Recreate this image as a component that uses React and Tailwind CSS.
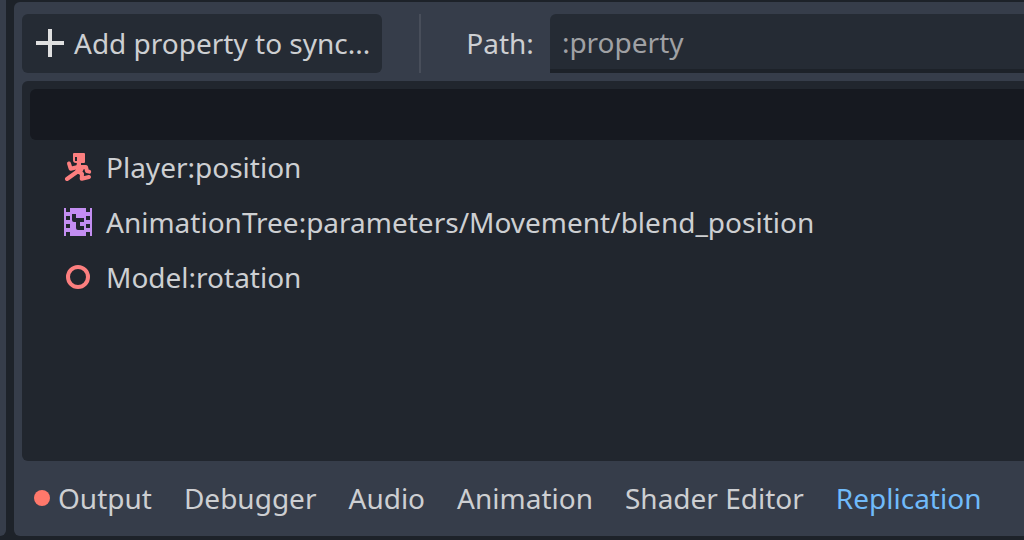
const properties = [
  { name: 'Player:position', Icon: RunnerIcon },
  { name: 'AnimationTree:parameters/Movement/blend_position', Icon: FilmIcon },
  { name: 'Model:rotation', Icon: RingIcon },
];

const tabs = ['Output', 'Debugger', 'Audio', 'Animation', 'Shader Editor', 'Replication'];

function PlusIcon() {
  return (
    <svg className="size-7 shrink-0" viewBox="0 0 28 28" fill="#e0e0e0" shapeRendering="crispEdges" aria-hidden="true">
      <path d="M12 0h4v12h12v4H16v12h-4V16H0v-4h12z" />
    </svg>
  );
}

function RunnerIcon() {
  return (
    <svg className="size-7 shrink-0" viewBox="0 0 28 28" fill="none" aria-hidden="true">
      <path
        fill="#fc7f7f"
        fillRule="evenodd"
        d="M10 0h10a1 1 0 0 1 1 1v8a1 1 0 0 1-1 1H12a3 3 0 0 1-3-3V1a1 1 0 0 1 1-1zM11 4v4h2V4z"
      />
      <path fill="#fc7f7f" d="M13 9h4v3h5l-3.5 6.5-2.5 3-5.5-1.5 1.5-4z" />
      <g stroke="#fc7f7f" strokeWidth="4" strokeLinecap="round" strokeLinejoin="round">
        <path d="M5 10.5 6.6 15.7 14 14" />
        <path d="M13.5 18.5 3 26" />
        <path d="M15 18.5l3 2.3-.3 5 7.3-1.8" />
        <path d="M16 14h6l1 4 2.2.6" />
      </g>
    </svg>
  );
}

function FilmIcon() {
  return (
    <svg className="size-7 shrink-0" viewBox="0 0 28 28" fill="#c38ef1" aria-hidden="true">
      <path
        fillRule="evenodd"
        d="M0 0h2v4h4V0h16v4h4V0h2v28h-2v-4h-4v4H6v-4H2v4H0zM2 8v4h4V8zM2 16v4h4v-4zM22 8v4h4V8zM22 16v4h4v-4zM8 6v6a2 2 0 0 0 2 2h2v6a2 2 0 0 0 2 2h6v-4h-4v-4h4v-4h-8V6z"
      />
    </svg>
  );
}

function RingIcon() {
  return (
    <svg className="size-7 shrink-0" viewBox="0 0 28 28" fill="none" aria-hidden="true">
      <circle cx="14" cy="14" r="10" stroke="#fc7f7f" strokeWidth="4" />
    </svg>
  );
}

export default function App() {
  return (
    <div className="flex h-screen gap-2 overflow-hidden bg-[#1d2229] pb-1 font-['Noto_Sans',sans-serif] text-[28px] leading-9 text-[#cdcfd2]">
      <aside className="w-1.5 shrink-0 rounded-br-md bg-[#363d4a]" />
      <main className="mt-0.5 flex min-w-0 flex-1 flex-col rounded-l-md bg-[#363d4a] pt-3 pl-2">
        <div className="flex h-[59px] shrink-0 items-stretch">
          <button
            type="button"
            className="flex shrink-0 items-center gap-2.5 rounded-md bg-[#252b34] pr-3 pb-px pl-3.5 whitespace-nowrap"
          >
            <PlusIcon />
            Add property to sync...
          </button>
          <div className="mx-[37px] w-0.5 shrink-0 bg-[#484e5a]" />
          <div className="flex min-w-0 flex-1 items-stretch gap-4 pl-2">
            <label htmlFor="path" className="flex shrink-0 items-center pb-px">
              Path:
            </label>
            <input
              id="path"
              type="text"
              placeholder=":property"
              className="min-w-0 flex-1 rounded-tl-md border-b-4 border-[#1d2229] bg-[#252b34] px-3 outline-none placeholder:text-[#a0a1a4]"
            />
          </div>
        </div>

        <section className="mt-2 min-h-0 flex-1 rounded-l-md bg-[#21262e] pt-2 pl-2">
          <div className="h-[51px] rounded-l-md bg-[#161920]" />
          <ul>
            {properties.map(({ name, Icon }) => (
              <li key={name} className="flex h-[55px] items-center gap-3.5 pb-px pl-[34px]">
                <Icon />
                <span className="whitespace-nowrap">{name}</span>
              </li>
            ))}
          </ul>
        </section>

        <nav className="flex h-[75px] shrink-0 items-center gap-8 pb-px pl-3">
          {tabs.map((tab) => (
            <button
              key={tab}
              type="button"
              className={
                tab === 'Replication'
                  ? 'flex items-center gap-2 whitespace-nowrap text-[#70bafa]'
                  : 'flex items-center gap-2 whitespace-nowrap'
              }
            >
              {tab === 'Output' && <span className="size-4 rounded-full bg-[#ff786b]" />}
              {tab}
            </button>
          ))}
        </nav>
      </main>
    </div>
  );
}
